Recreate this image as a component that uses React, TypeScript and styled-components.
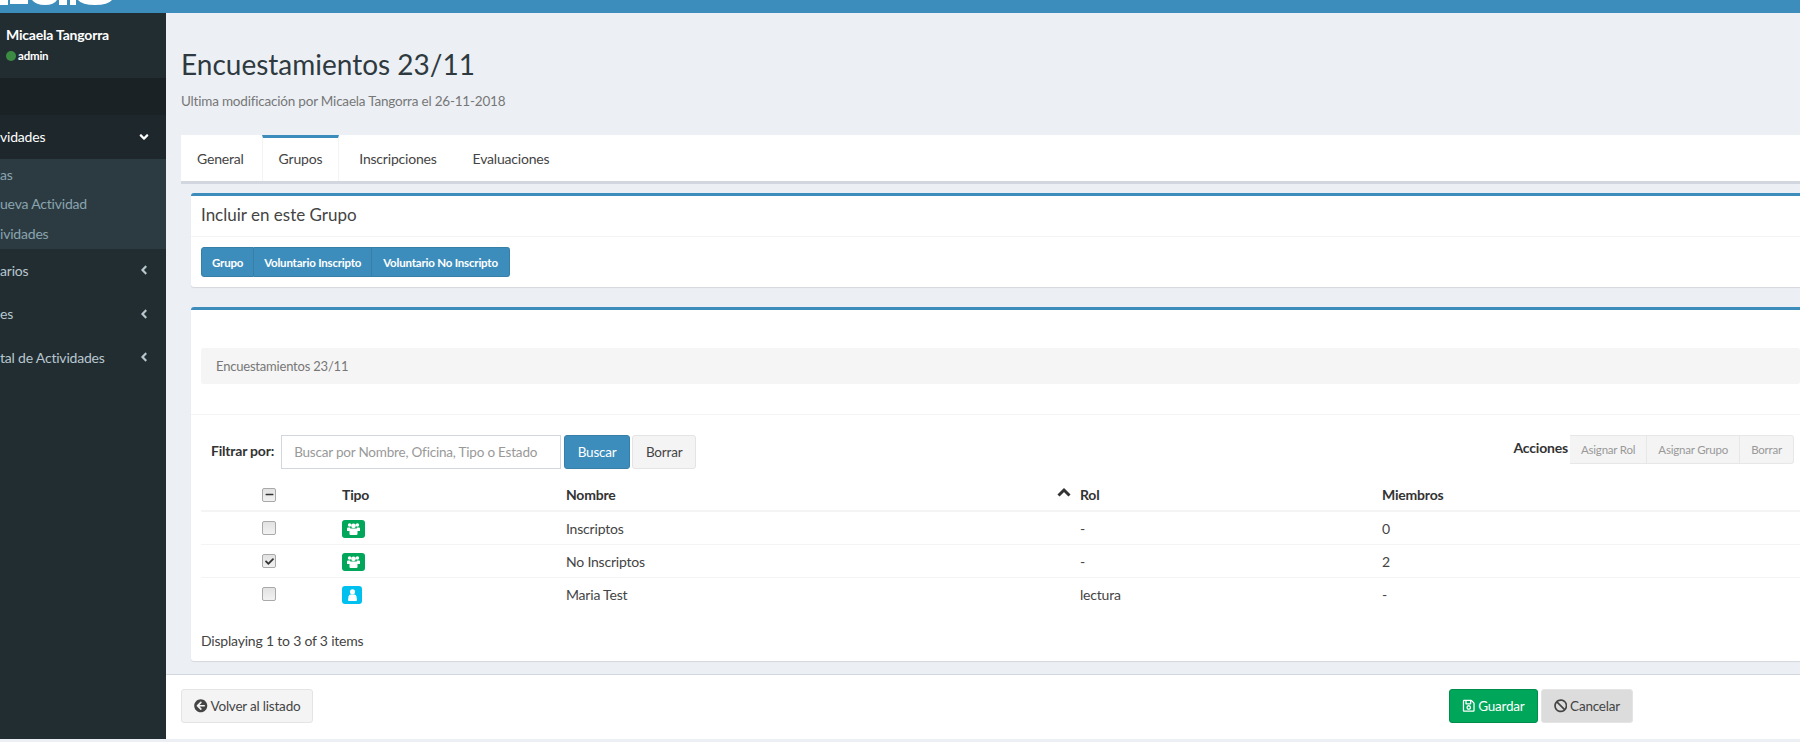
import React from 'react';
import styled, { createGlobalStyle } from 'styled-components';
import {
  FaAngleDown,
  FaAngleLeft,
  FaArrowCircleLeft,
  FaBan,
  FaCheck,
  FaMinus,
  FaRegSave,
} from 'react-icons/fa';

const GlobalStyle = createGlobalStyle`
  html, body {
    margin: 0;
    height: 742px;
    overflow: hidden;
    background: #ecf0f5;
    font-family: Lato, "Noto Sans", sans-serif;
    font-size: 14px;
    letter-spacing: -0.2px;
    color: #333;
  }
`;

const Page = styled.div`
  width: 1800px;
  height: 739px;
  display: flex;
  flex-direction: column;
  overflow: hidden;
`;

const TopBar = styled.header`
  height: 13px;
  flex: none;
  background: #3c8dbc;
  display: flex;
  justify-content: space-between;
  padding-right: 90px;
`;

const Body = styled.div`
  flex: 1;
  display: flex;
  min-height: 0;
`;

const Sidebar = styled.aside`
  width: 166px;
  flex: none;
  background: #222d32;
  color: #b8c7ce;
`;

const UserPanel = styled.div`
  height: 65px;
  padding: 14px 0 0 6px;
  box-sizing: border-box;
  color: #fff;
`;

const UserName = styled.div`
  font-weight: 700;
  font-size: 14px;
  line-height: 16px;
`;

const UserRole = styled.div`
  display: flex;
  align-items: center;
  gap: 2px;
  margin-top: 6px;
  font-size: 11.5px;
  font-weight: 700;
  line-height: 14px;
`;

const StatusDot = styled.span`
  width: 10px;
  height: 10px;
  border-radius: 50%;
  background: #3c8b43;
`;

const SearchBand = styled.div`
  height: 37px;
  background: #1a2226;
`;

const MenuItem = styled.div<{ $active?: boolean }>`
  height: 43.5px;
  display: flex;
  align-items: center;
  justify-content: space-between;
  padding-right: 15px;
  background: ${(p) => (p.$active ? '#1e282c' : 'transparent')};
  color: ${(p) => (p.$active ? '#fff' : '#b8c7ce')};
`;

const SubMenu = styled.div`
  height: 90px;
  padding-top: 1px;
  box-sizing: border-box;
  background: #2c3b41;
  color: #8aa4af;
`;

const SubItem = styled.div`
  height: 29.5px;
  line-height: 29px;
`;

const Main = styled.main`
  flex: 1;
  min-width: 0;
  display: flex;
  flex-direction: column;
`;

const Content = styled.div`
  flex: 1;
  padding-left: 15px;
`;

const Title = styled.h1`
  margin: 0;
  padding-top: 32px;
  font-size: 28px;
  font-weight: 400;
  line-height: 38px;
  letter-spacing: 0;
  color: #2f3a40;
`;

const Subtitle = styled.p`
  margin: 8px 0 0;
  font-size: 13.5px;
  line-height: 20px;
  color: #777;
`;

const Tabs = styled.nav`
  margin-top: 24px;
  height: 46px;
  display: flex;
  background: #fff;
  border-bottom: 3px solid #d2d6de;
`;

const Tab = styled.div<{ $active?: boolean }>`
  padding: 0 16px;
  line-height: 48px;
  color: #444;
  box-sizing: border-box;
  ${(p) =>
    p.$active
      ? `
    border-top: 3px solid #3c8dbc;
    border-left: 1px solid #f4f4f4;
    border-right: 1px solid #f4f4f4;
    line-height: 42px;
    height: 46px;
    margin: 0 2px 0 2px;
  `
      : ''}
`;

const WideTab = styled(Tab)`
  padding: 0 18px;
`;

const TabBody = styled.div`
  padding-left: 10px;
`;

const Box = styled.section<{ $top: number; $height: number }>`
  margin-top: ${(p) => p.$top}px;
  height: ${(p) => p.$height}px;
  box-sizing: border-box;
  background: #fff;
  border-top: 3px solid #3c8dbc;
  border-radius: 3px 0 0 3px;
  box-shadow: 0 1px 1px rgba(0, 0, 0, 0.1);
`;

const BoxTitle = styled.h3`
  margin: 0;
  height: 40px;
  padding-left: 10px;
  font-size: 17px;
  font-weight: 400;
  line-height: 38px;
  letter-spacing: 0;
  color: #444;
  border-bottom: 1px solid #f4f4f4;
`;

const GroupRow = styled.div`
  display: flex;
  padding: 10px 0 0 10px;
`;

const IncludeButton = styled.button`
  height: 30px;
  padding: 0 10px;
  border: 1px solid #367fa9;
  border-left-width: 0;
  background: #3c8dbc;
  color: #fff;
  font: 700 11.5px Lato, sans-serif;
  letter-spacing: -0.2px;

  &:first-child {
    border-left-width: 1px;
    border-radius: 3px 0 0 3px;
  }

  &:last-child {
    padding: 0 11px;
    border-radius: 0 3px 3px 0;
  }
`;

const Breadcrumb = styled.div`
  margin: 38px 0 0 10px;
  height: 36px;
  padding-left: 15px;
  line-height: 36px;
  font-size: 13px;
  color: #777;
  background: #f5f5f5;
  border-radius: 3px;
`;

const Divider = styled.hr`
  margin: 30px 0 0;
  border: 0;
  border-top: 1px solid #f4f4f4;
`;

const Toolbar = styled.div`
  display: flex;
  justify-content: space-between;
  padding: 20px 6px 0 20px;
  height: 34px;
`;

const ToolGroup = styled.div`
  display: flex;
  align-items: flex-start;
`;

const ToolLabel = styled.label`
  margin-top: 7px;
  font-weight: 700;
  line-height: 18px;
  color: #333;
`;

const SearchInput = styled.input`
  width: 280px;
  height: 34px;
  margin-left: 7px;
  padding: 0 12px;
  box-sizing: border-box;
  border: 1px solid #d2d6de;
  font: 13.5px Lato, sans-serif;
  letter-spacing: -0.2px;

  &::placeholder {
    color: #999;
    opacity: 1;
  }
`;

const Button = styled.button<{ $variant?: 'primary' | 'success' | 'muted' }>`
  height: 34px;
  padding: 0 12px;
  display: inline-flex;
  align-items: center;
  gap: 3px;
  border-radius: 3px;
  font: 13.5px Lato, sans-serif;
  letter-spacing: -0.2px;
  border: 1px solid
    ${(p) =>
      p.$variant === 'primary' ? '#367fa9' : p.$variant === 'success' ? '#008d4c' : '#e4e4e4'};
  background: ${(p) =>
    p.$variant === 'primary'
      ? '#3c8dbc'
      : p.$variant === 'success'
        ? '#00a65a'
        : p.$variant === 'muted'
          ? '#dcdcdc'
          : '#f4f4f4'};
  color: ${(p) => (p.$variant === 'primary' || p.$variant === 'success' ? '#fff' : '#444')};
`;

const SearchButton = styled(Button)`
  margin-left: 3px;
  width: 66px;
  justify-content: center;
`;

const ClearButton = styled(Button)`
  margin-left: 2px;
  width: 64px;
  justify-content: center;
`;

const ActionButton = styled.button`
  height: 29px;
  padding: 0 11px;
  background: #f4f4f4;
  border: 1px solid #e7e7e7;
  border-left-width: 0;
  color: #999;
  font: 11.5px Lato, sans-serif;
  letter-spacing: -0.2px;

  &:first-child {
    border-left-width: 1px;
    border-radius: 3px 0 0 3px;
  }

  &:last-child {
    border-radius: 0 3px 3px 0;
  }
`;

const ActionLabel = styled(ToolLabel)`
  margin: 4px 2px 0 0;
`;

const Table = styled.table`
  margin: 8px 0 0 10px;
  width: calc(100% - 10px);
  border-collapse: collapse;
  table-layout: fixed;
`;

const HeadCell = styled.th`
  height: 34px;
  padding: 2px 0 0;
  box-sizing: border-box;
  text-align: left;
  font-weight: 700;
  color: #333;
  border-bottom: 2px solid #f4f4f4;
  position: relative;
`;

const Cell = styled.td`
  height: 32px;
  padding: 0;
  color: #444;
  border-top: 1px solid #f4f4f4;
`;

const CheckCell = styled.span`
  width: 12px;
  height: 12px;
  margin-left: 61px;
  border: 1px solid #a9a9a9;
  border-radius: 2px;
  background: linear-gradient(#e2e2e2, #f2f2f2);
  color: #333;
  display: flex;
  align-items: center;
  justify-content: center;
  font-size: 9px;
`;

const TypeBadge = styled.span<{ $kind: 'group' | 'person' }>`
  width: ${(p) => (p.$kind === 'group' ? 23 : 20)}px;
  height: 18px;
  margin-top: 2px;
  border-radius: 3px;
  display: flex;
  align-items: center;
  justify-content: center;
  background: ${(p) => (p.$kind === 'group' ? '#00a65a' : '#00c0ef')};
`;

const SortCaret = styled.svg`
  position: absolute;
  right: 9px;
  top: 10px;
`;

const TableInfo = styled.div`
  margin: 21px 0 0 10px;
  line-height: 20px;
  color: #444;
`;

const Footer = styled.footer`
  height: 65px;
  flex: none;
  box-sizing: border-box;
  background: #fff;
  border-top: 1px solid #d2d6de;
  display: flex;
  align-items: flex-start;
  padding: 14px 167px 0 15px;
  justify-content: space-between;
`;

const FooterActions = styled.div`
  display: flex;
  gap: 3px;
`;

const rows = [
  { name: 'Inscriptos', role: '-', members: '0', kind: 'group' as const, checked: false },
  { name: 'No Inscriptos', role: '-', members: '2', kind: 'group' as const, checked: true },
  { name: 'Maria Test', role: 'lectura', members: '-', kind: 'person' as const, checked: false },
];

// only the feet of the logo letters show above the fold
const Logo = () => (
  <svg width="116" height="13" viewBox="0 0 116 13">
    <path d="M0 0h8v5H0zM10 0h18v4H10z" fill="#fff" />
    <path d="M32 0h25q-3 5-12 5T32 0z" fill="#fff" />
    <path d="M59 0h8v5h-8zM70 0h6v5h-6z" fill="#fff" />
    <path d="M78 0h34q-4 5-17 5T78 0z" fill="#fff" />
  </svg>
);

const GroupGlyph = () => (
  <svg width="13" height="12" viewBox="0 0 13 12" fill="#fff">
    <circle cx="2.6" cy="2" r="1.8" />
    <circle cx="10.4" cy="2" r="1.8" />
    <circle cx="6.5" cy="2.8" r="2.4" />
    <path d="M1 4.5h2.2v1h6.6v-1H12q1 0 1 1V8H10.5v3q0 1-1 1h-6q-1 0-1-1V8H0V5.5q0-1 1-1z" />
  </svg>
);

const PersonGlyph = () => (
  <svg width="9" height="12" viewBox="0 0 9 12" fill="#fff">
    <circle cx="4.5" cy="2.8" r="2.6" />
    <path d="M2.5 5.5h4q1.5 0 2 2L9 11q0 1-1 1H1q-1 0-1-1l.5-3.5q.5-2 2-2z" />
  </svg>
);

const App: React.FC = () => {
  return (
    <Page>
      <GlobalStyle />
      <TopBar>
        <Logo />
      </TopBar>
      <Body>
        <Sidebar>
          <UserPanel>
            <UserName>Micaela Tangorra</UserName>
            <UserRole>
              <StatusDot />
              admin
            </UserRole>
          </UserPanel>
          <SearchBand />
          <MenuItem $active>
            vidades
            <FaAngleDown />
          </MenuItem>
          <SubMenu>
            <SubItem>as</SubItem>
            <SubItem>ueva Actividad</SubItem>
            <SubItem>ividades</SubItem>
          </SubMenu>
          <MenuItem>
            arios
            <FaAngleLeft />
          </MenuItem>
          <MenuItem>
            es
            <FaAngleLeft />
          </MenuItem>
          <MenuItem>
            tal de Actividades
            <FaAngleLeft />
          </MenuItem>
        </Sidebar>
        <Main>
          <Content>
            <Title>Encuestamientos 23/11</Title>
            <Subtitle>Ultima modificación por Micaela Tangorra el 26-11-2018</Subtitle>
            <Tabs>
              <Tab>General</Tab>
              <Tab $active>Grupos</Tab>
              <WideTab>Inscripciones</WideTab>
              <WideTab>Evaluaciones</WideTab>
            </Tabs>
            <TabBody>
              <Box $top={9} $height={94}>
                <BoxTitle>Incluir en este Grupo</BoxTitle>
                <GroupRow>
                  <IncludeButton>Grupo</IncludeButton>
                  <IncludeButton>Voluntario Inscripto</IncludeButton>
                  <IncludeButton>Voluntario No Inscripto</IncludeButton>
                </GroupRow>
              </Box>
              <Box $top={20} $height={354}>
                <Breadcrumb>Encuestamientos 23/11</Breadcrumb>
                <Divider />
                <Toolbar>
                  <ToolGroup>
                    <ToolLabel>Filtrar por:</ToolLabel>
                    <SearchInput placeholder="Buscar por Nombre, Oficina, Tipo o Estado" />
                    <SearchButton $variant="primary">Buscar</SearchButton>
                    <ClearButton>Borrar</ClearButton>
                  </ToolGroup>
                  <ToolGroup>
                    <ActionLabel>Acciones</ActionLabel>
                    <ActionButton>Asignar Rol</ActionButton>
                    <ActionButton>Asignar Grupo</ActionButton>
                    <ActionButton>Borrar</ActionButton>
                  </ToolGroup>
                </Toolbar>
                <Table>
                  <colgroup>
                    <col width="141" />
                    <col width="224" />
                    <col width="514" />
                    <col width="302" />
                    <col />
                  </colgroup>
                  <thead>
                    <tr>
                      <HeadCell>
                        <CheckCell>
                          <FaMinus />
                        </CheckCell>
                      </HeadCell>
                      <HeadCell>Tipo</HeadCell>
                      <HeadCell>
                        Nombre
                        <SortCaret width="14" height="10" viewBox="0 0 14 10">
                          <path d="M1.5 8.5L7 3l5.5 5.5" fill="none" stroke="#333" strokeWidth="3" />
                        </SortCaret>
                      </HeadCell>
                      <HeadCell>Rol</HeadCell>
                      <HeadCell>Miembros</HeadCell>
                    </tr>
                  </thead>
                  <tbody>
                    {rows.map((row) => (
                      <tr key={row.name}>
                        <Cell>
                          <CheckCell>{row.checked && <FaCheck />}</CheckCell>
                        </Cell>
                        <Cell>
                          <TypeBadge $kind={row.kind}>
                            {row.kind === 'group' ? <GroupGlyph /> : <PersonGlyph />}
                          </TypeBadge>
                        </Cell>
                        <Cell>{row.name}</Cell>
                        <Cell>{row.role}</Cell>
                        <Cell>{row.members}</Cell>
                      </tr>
                    ))}
                  </tbody>
                </Table>
                <TableInfo>Displaying 1 to 3 of 3 items</TableInfo>
              </Box>
            </TabBody>
          </Content>
          <Footer>
            <Button>
              <FaArrowCircleLeft />
              Volver al listado
            </Button>
            <FooterActions>
              <Button $variant="success">
                <FaRegSave />
                Guardar
              </Button>
              <Button $variant="muted">
                <FaBan />
                Cancelar
              </Button>
            </FooterActions>
          </Footer>
        </Main>
      </Body>
    </Page>
  );
};

export default App;
